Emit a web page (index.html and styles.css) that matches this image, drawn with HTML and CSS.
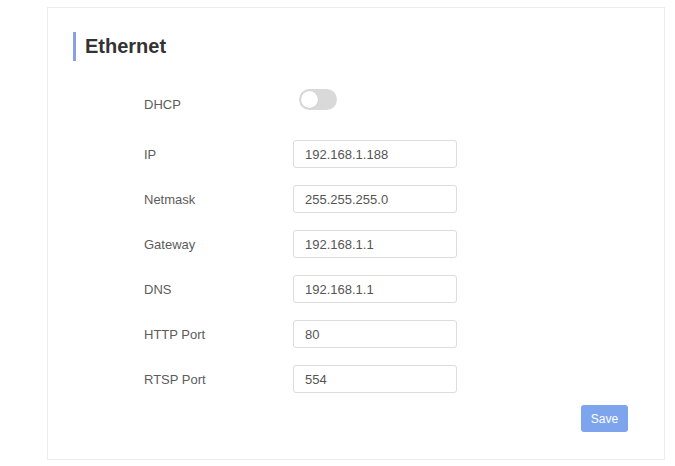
FILE: index.html
```html
<!DOCTYPE html>
<html lang="en">
<head>
<meta charset="utf-8">
<title>Ethernet</title>
<link rel="stylesheet" href="styles.css">
</head>
<body>
<div class="page">
  <div class="card">
    <div class="header">
      <span class="accent"></span>
      <h1 class="title">Ethernet</h1>
    </div>
    <form class="form">
      <div class="row row-switch">
        <label class="label">DHCP</label>
        <span class="switch"><span class="knob"></span></span>
      </div>
      <div class="row row-first">
        <label class="label">IP</label>
        <input class="input" type="text" value="192.168.1.188">
      </div>
      <div class="row">
        <label class="label">Netmask</label>
        <input class="input" type="text" value="255.255.255.0">
      </div>
      <div class="row">
        <label class="label">Gateway</label>
        <input class="input" type="text" value="192.168.1.1">
      </div>
      <div class="row">
        <label class="label">DNS</label>
        <input class="input" type="text" value="192.168.1.1">
      </div>
      <div class="row">
        <label class="label">HTTP Port</label>
        <input class="input" type="text" value="80">
      </div>
      <div class="row">
        <label class="label">RTSP Port</label>
        <input class="input" type="text" value="554">
      </div>
      <div class="actions">
        <button class="btn" type="button">Save</button>
      </div>
    </form>
  </div>
</div>
</body>
</html>
```

FILE: styles.css
```css
html, body {
  margin: 0;
  padding: 0;
  background: #ffffff;
  font-family: "Liberation Sans", Arial, sans-serif;
}

.page {
  padding: 7px 10px 5px 47px;
}

.card {
  border: 1px solid #ececec;
  padding: 24px 36px 27px 25px;
  background: #fff;
}

.header {
  display: flex;
  align-items: center;
}

.accent {
  width: 3px;
  height: 29px;
  background: #8c9fe2;
}

.title {
  margin: 0 0 0 9px;
  font-size: 20px;
  line-height: 29px;
  font-weight: bold;
  color: #333333;
}

.form {
  margin: 30px 0 0 0;
  padding-left: 71px;
}

.row {
  display: flex;
  align-items: center;
  height: 28px;
  margin-top: 17px;
}

.row-switch {
  margin-top: 0;
  align-items: flex-start;
}

.row-switch .label {
  line-height: 28px;
}

.row-first {
  margin-top: 21px;
}

.label {
  width: 149px;
  font-size: 13px;
  color: #5c5c5c;
}

.switch {
  position: relative;
  display: block;
  width: 38px;
  height: 21px;
  margin: -2px 0 0 6px;
  border-radius: 11px;
  background: #d9d9d9;
}

.knob {
  position: absolute;
  left: 2px;
  top: 2px;
  width: 17px;
  height: 17px;
  border-radius: 50%;
  background: #ffffff;
  box-shadow: 0 0 0 0.5px #c8c8c8;
}

.input {
  box-sizing: border-box;
  width: 164px;
  height: 28px;
  padding: 0 11px;
  border: 1px solid #dcdcdc;
  border-radius: 3px;
  font-family: "Liberation Sans", Arial, sans-serif;
  font-size: 13px;
  color: #555555;
  background: #fff;
  outline: none;
}

.actions {
  display: flex;
  justify-content: flex-end;
  margin-top: 12px;
}

.btn {
  width: 47px;
  height: 27px;
  padding: 0;
  border: none;
  border-radius: 3px;
  background: #7ea4ee;
  color: #ffffff;
  font-family: "Liberation Sans", Arial, sans-serif;
  font-size: 12px;
}
```
